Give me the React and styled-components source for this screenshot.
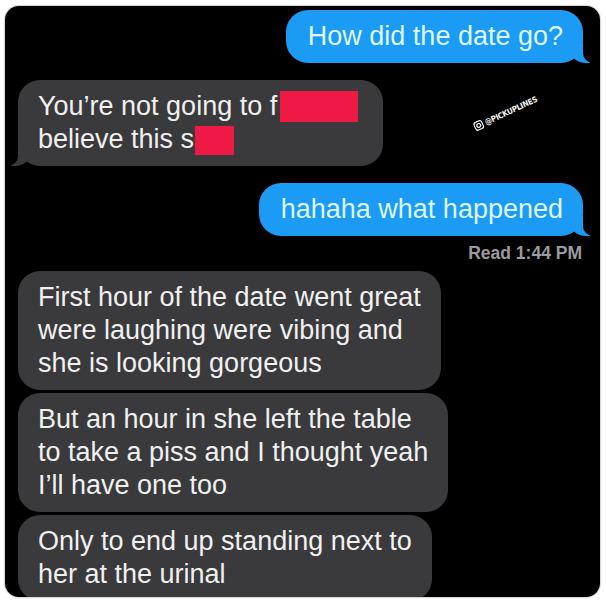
import React from 'react'
import styled, { createGlobalStyle, css } from 'styled-components'

const GlobalStyle = createGlobalStyle`
	html, body {
		margin: 0;
		padding: 0;
		background: #fff;
	}
	body {
		font-family: 'Liberation Sans', Arial, sans-serif;
	}
`

const Frame = styled.div`
	padding: 6px 6px 3px 5px;
`

const Screen = styled.div`
	position: relative;
	box-sizing: border-box;
	height: 591px;
	background: #000;
	border-radius: 14px;
	box-shadow: 0 0 0 1px #d6d6d6, 0 0 3px rgba(0, 0, 0, 0.12);
	overflow: hidden;
	padding: 4px 17px 0 13px;
	display: flex;
	flex-direction: column;
`

const blueTail = css`
	&::before {
		content: '';
		position: absolute;
		bottom: 0;
		right: -7px;
		width: 20px;
		height: 20px;
		background: #1b9bf3;
		border-bottom-left-radius: 16px 14px;
	}
	&::after {
		content: '';
		position: absolute;
		bottom: 0;
		right: -26px;
		width: 26px;
		height: 20px;
		background: #000;
		border-bottom-left-radius: 10px;
	}
`

const grayTail = css`
	&::before {
		content: '';
		position: absolute;
		bottom: 0;
		left: -7px;
		width: 20px;
		height: 20px;
		background: #3a3a3c;
		border-bottom-right-radius: 16px 14px;
	}
	&::after {
		content: '';
		position: absolute;
		bottom: 0;
		left: -26px;
		width: 26px;
		height: 20px;
		background: #000;
		border-bottom-right-radius: 10px;
	}
`

const Bubble = styled.div`
	position: relative;
	flex-shrink: 0;
	align-self: ${(p) => (p.$me ? 'flex-end' : 'flex-start')};
	margin-top: ${(p) => p.$gap || 0}px;
	padding: 10px ${(p) => p.$padRight || 20}px 10px ${(p) => (p.$me ? 22 : 20)}px;
	border-radius: 22px;
	background: ${(p) => (p.$me ? '#1b9bf3' : '#3a3a3c')};
	color: ${(p) => (p.$me ? '#ddf6ff' : '#f0f0f0')};
	font-size: 27px;
	line-height: 33px;
	white-space: nowrap;
	${(p) => p.$tail && (p.$me ? blueTail : grayTail)}
`

const Redact = styled.span`
	display: inline-block;
	width: ${(p) => p.$w}px;
	height: ${(p) => p.$h}px;
	margin-left: ${(p) => p.$nudge || 0}px;
	vertical-align: -7px;
	background: #ee1a45;
`

const Receipt = styled.div`
	align-self: flex-end;
	margin: 7px 1px 0 0;
	font-size: 17.5px;
	line-height: 20px;
	color: #9b9b9f;
	font-weight: 700;
`

const Watermark = styled.div`
	position: absolute;
	left: 466px;
	top: 102px;
	display: flex;
	align-items: center;
	gap: 2px;
	transform: rotate(-25deg);
	color: #f2f2f2;
	font-family: 'DejaVu Sans Condensed', 'Liberation Sans', sans-serif;
	font-size: 8px;
	font-weight: 700;
	letter-spacing: -0.3px;
	white-space: nowrap;
`

const InstaIcon = () => (
	<svg width='10' height='10' viewBox='0 0 24 24' fill='none' stroke='#f2f2f2' strokeWidth='3'>
		<rect x='2' y='2' width='20' height='20' rx='6' />
		<circle cx='12' cy='12' r='4.5' />
	</svg>
)

const Lines = ({ lines }) =>
	lines.map((line, i) => (
		<React.Fragment key={i}>
			{i > 0 && <br />}
			{line}
		</React.Fragment>
	))

export default function App() {
	return (
		<>
			<GlobalStyle />
			<Frame>
				<Screen>
					<Bubble $me $tail>
						How did the date go?
					</Bubble>
					<Bubble $tail $gap={17} $padRight={25}>
						You’re not going to f
						<Redact $w={78} $h={31} $nudge={3} />
						<br />
						believe this s
						<Redact $w={39} $h={29} $nudge={1} />
					</Bubble>
					<Bubble $me $tail $gap={17}>
						hahaha what happened
					</Bubble>
					<Receipt>Read 1:44 PM</Receipt>
					<Bubble $gap={8}>
						<Lines
							lines={[
								'First hour of the date went great',
								'were laughing were vibing and',
								'she is looking gorgeous'
							]}
						/>
					</Bubble>
					<Bubble $gap={3}>
						<Lines
							lines={[
								'But an hour in she left the table',
								'to take a piss and I thought yeah',
								'I’ll have one too'
							]}
						/>
					</Bubble>
					<Bubble $gap={3}>
						<Lines lines={['Only to end up standing next to', 'her at the urinal']} />
					</Bubble>
					<Watermark>
						<InstaIcon />
						@PICKUPLINES
					</Watermark>
				</Screen>
			</Frame>
		</>
	)
}
